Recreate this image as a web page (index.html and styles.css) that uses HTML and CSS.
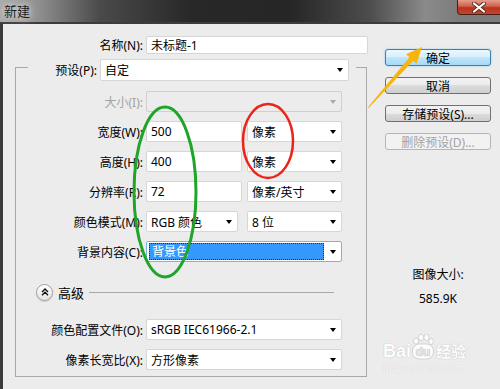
FILE: index.html
```html
<!DOCTYPE html>
<html lang="zh-CN">
<head>
    <meta charset="UTF-8">
    <title>新建</title>
    <link rel="stylesheet" href="styles.css">
</head>
<body>

<div class="window">
    <!-- Title bar -->
    <div class="titlebar">
        <span class="title">新建</span>
        <span class="close">
            <svg width="16" height="11" viewBox="0 0 16 11">
                <path d="M3 1.5 L13 9.5 M13 1.5 L3 9.5" stroke="#5a2a22" stroke-width="4" stroke-linecap="round"/>
                <path d="M3 1.5 L13 9.5 M13 1.5 L3 9.5" stroke="#fff" stroke-width="2.2" stroke-linecap="round"/>
            </svg>
        </span>
    </div>

    <div class="body">
        <!-- Left: form -->
        <div class="form">
            <div class="row name-row">
                <label class="lbl">名称(N):</label>
                <div class="field name-field">未标题-1</div>
            </div>

            <div class="group">
                <div class="legend">
                    <label class="lbl legend-lbl">预设(P):</label>
                    <div class="field select preset">自定<i class="arrow"></i></div>
                </div>

                <div class="row size-row">
                    <label class="lbl g-lbl disabled-text">大小(I):</label>
                    <div class="field select disabled full"><i class="arrow grey"></i></div>
                </div>

                <div class="row">
                    <label class="lbl g-lbl">宽度(W):</label>
                    <div class="field num">500</div>
                    <div class="field select unit">像素<i class="arrow"></i></div>
                </div>

                <div class="row">
                    <label class="lbl g-lbl">高度(H):</label>
                    <div class="field num">400</div>
                    <div class="field select unit">像素<i class="arrow"></i></div>
                </div>

                <div class="row">
                    <label class="lbl g-lbl">分辨率(R):</label>
                    <div class="field num">72</div>
                    <div class="field select unit">像素/英寸<i class="arrow"></i></div>
                </div>

                <div class="row">
                    <label class="lbl g-lbl">颜色模式(M):</label>
                    <div class="field select mode">RGB 颜色<i class="arrow"></i></div>
                    <div class="field select bits">8 位<i class="arrow"></i></div>
                </div>

                <div class="row">
                    <label class="lbl g-lbl">背景内容(C):</label>
                    <div class="field select full focused">
                        <span class="highlight">背景色</span><i class="arrow"></i>
                    </div>
                </div>

                <div class="advanced">
                    <span class="toggle">
                        <svg width="8" height="8" viewBox="0 0 8 8">
                            <path d="M1 4 L4 1 L7 4 M1 7.2 L4 4.2 L7 7.2" fill="none" stroke="#111" stroke-width="1.4"/>
                        </svg>
                    </span>
                    <span class="adv-text">高级</span>
                    <span class="adv-line"></span>
                </div>

                <div class="row profile-row">
                    <label class="lbl g-lbl">颜色配置文件(O):</label>
                    <div class="field select full">sRGB IEC61966-2.1<i class="arrow"></i></div>
                </div>

                <div class="row">
                    <label class="lbl g-lbl">像素长宽比(X):</label>
                    <div class="field select full">方形像素<i class="arrow"></i></div>
                </div>
            </div>
        </div>

        <!-- Right: buttons -->
        <div class="side">
            <div class="btn primary">确定</div>
            <div class="btn">取消</div>
            <div class="btn">存储预设(S)...</div>
            <div class="btn disabled">删除预设(D)...</div>
            <div class="info-label">图像大小:</div>
            <div class="info-value">585.9K</div>
        </div>
    </div>

    <!-- hand-drawn annotations on top of the screenshot -->
    <svg class="marks" width="500" height="389" viewBox="0 0 500 389">
        <ellipse cx="165" cy="192" rx="31" ry="85" fill="none" stroke="#1fa52a" stroke-width="3"/>
        <ellipse cx="268" cy="141" rx="25" ry="37" fill="none" stroke="#ea2418" stroke-width="2.5"/>
        <polygon points="367.6,107.7 409.4,57.3 406,54.3 422,47 416.6,63.7 413.2,60.7 368.4,108.3" fill="#f7b50c"/>
    </svg>

    <!-- watermark -->
    <div class="watermark">
        <div class="wm-logo">
            <span class="wm-bai">Bai</span>
            <svg class="wm-paw" width="24" height="26" viewBox="0 0 24 26">
                <ellipse cx="5" cy="7" rx="2.6" ry="3.2" fill="#fff" stroke="#cfcfcf"/>
                <ellipse cx="10" cy="3.5" rx="2.6" ry="3.2" fill="#fff" stroke="#cfcfcf"/>
                <ellipse cx="15.5" cy="3.5" rx="2.6" ry="3.2" fill="#fff" stroke="#cfcfcf"/>
                <ellipse cx="20" cy="7.5" rx="2.4" ry="3" fill="#fff" stroke="#cfcfcf"/>
                <rect x="1.5" y="10" width="21" height="15" rx="7" fill="#fff" stroke="#cfcfcf"/>
                <text x="12" y="22" text-anchor="middle" font-family="Liberation Sans, sans-serif" font-size="12" font-weight="bold" fill="#e4e4e4">du</text>
            </svg>
            <span class="wm-jy">经验</span>
        </div>
        <div class="wm-url">jingyan.baidu.com</div>
    </div>
</div>

</body>
</html>
```

FILE: styles.css
```css
* {
    box-sizing: border-box;
}

body {
    margin: 0;
    font-family: "Noto Sans", "Noto Sans CJK SC", sans-serif;
    font-size: 12px;
    color: #000;
}

.window {
    width: 500px;
    height: 389px;
    background-color: #ececec;
    position: relative;
    overflow: hidden;
    display: flex;
    flex-direction: column;
}

/* title bar */
.titlebar {
    height: 24px;
    flex: none;
    display: flex;
    justify-content: space-between;
    align-items: flex-start;
    background: linear-gradient(to right, #aaaaaa 0, #8e8e8e 40px, #4a4a4a 100px, #282828 190px, #262626 290px, #4d4d4d 370px, #8a8a8a 425px, #7c7c7c 460px);
    border-bottom: 2px solid #3c3c3c;
}

.title {
    font-family: "Noto Sans CJK SC", sans-serif;
    font-size: 13px;
    line-height: 21px;
    padding-left: 4px;
    color: #1a1a1a;
    text-shadow: 0 0 6px #ddd, 0 0 10px #ddd;
}

.close {
    width: 43px;
    height: 15px;
    border: 1px solid #4b1d16;
    border-top: none;
    border-right: none;
    border-radius: 0 0 0 4px;
    background: linear-gradient(#e49e8f, #d0604a 45%, #b9341f 55%, #c8432c);
    display: flex;
    align-items: center;
    justify-content: center;
}

/* dialog body */
.body {
    flex: 1;
    display: flex;
    border-left: 3px solid #3a3a3a;
    padding-top: 12px;
}

.form {
    width: 365px;
    flex: none;
}

.row {
    display: flex;
    align-items: center;
    height: 21px;
    margin-top: 9px;
}

.lbl {
    flex: none;
    width: 143px;
    padding-right: 3px;
    text-align: right;
    font-family: "Noto Sans", "Noto Sans CJK SC", sans-serif;
    white-space: nowrap;
}

.name-row {
    height: 18px;
    margin-top: 0;
}

.name-field {
    width: 222px;
}

.field {
    height: 100%;
    background-color: #fff;
    border: 1px solid #d6d6d6;
    border-radius: 2px;
    padding-left: 4px;
    display: flex;
    align-items: center;
    white-space: nowrap;
}

.select {
    padding-right: 5px;
}

.arrow {
    margin-left: auto;
    width: 0;
    height: 0;
    border-style: solid;
    border-width: 4px 3.5px 0;
    border-color: #000 transparent transparent;
}

.arrow.grey {
    border-top-color: #a8a8a8;
}

/* group box */
.group {
    margin: 13px 0 0 12px;
    width: 352px;
    height: 310px;
    border: 1px solid #a9a9a9;
    display: flex;
    flex-direction: column;
}

.legend {
    margin: -9px 0 0 12px;
    width: 328px;
    height: 22px;
    flex: none;
    display: flex;
    align-items: center;
    background-color: #ececec;
}

.legend-lbl {
    width: 72px;
}

.preset {
    width: 249px;
}

.g-lbl {
    width: 130px;
}

.size-row {
    margin-top: 10px;
}

.disabled-text {
    color: #a2a2a2;
}

.select.disabled {
    background-color: #ececec;
    border-color: #cfcfcf;
}

.full {
    width: 196px;
}

.num {
    width: 96px;
}

.unit,
.bits {
    width: 95px;
    margin-left: 5px;
}

.mode {
    width: 92px;
}

.bits {
    margin-left: 9px;
}

.focused {
    border-color: #7fb2e3;
    padding-left: 2px;
}

.highlight {
    width: 175px;
    height: 17px;
    background-color: #3399ff;
    color: #fff;
    outline: 1px dotted #3a2a10;
    outline-offset: -1px;
    padding-left: 3px;
    line-height: 17px;
}

/* advanced */
.advanced {
    margin-top: 21px;
    height: 18px;
    display: flex;
    align-items: center;
}

.toggle {
    margin-left: 20px;
    width: 17px;
    height: 17px;
    border: 1px solid #a0a0a0;
    border-radius: 50%;
    background: linear-gradient(#ffffff, #e2e2e2);
    box-shadow: 0 1px 1px rgba(0, 0, 0, 0.15);
    display: flex;
    align-items: center;
    justify-content: center;
}

.adv-text {
    margin-left: 5px;
    font-size: 13px;
}

.adv-line {
    flex: 1;
    height: 1px;
    background-color: #a9a9a9;
    margin: 0 32px 0 5px;
}

.profile-row {
    margin-top: 18px;
}

/* right column */
.side {
    margin-left: 17px;
    padding-top: 13px;
    width: 106px;
    display: flex;
    flex-direction: column;
}

.btn {
    height: 17px;
    margin-bottom: 11px;
    border: 1px solid #707070;
    border-radius: 3px;
    background: linear-gradient(#f3f3f3 0, #ebebeb 50%, #dcdcdc 50%, #cfcfcf 100%);
    display: flex;
    align-items: center;
    justify-content: center;
    white-space: nowrap;
}

.btn.primary {
    border-color: #3c7fb1;
    background: linear-gradient(#eaf6fd 0, #d9f0fc 50%, #bee6fd 50%, #a7d9f5 100%);
    box-shadow: 0 0 2px #7fc4ee;
}

.btn.disabled {
    border-color: #b3b6b8;
    background: #f2f2f2;
    color: #a3a3a3;
}

.info-label {
    margin-top: 106px;
    text-align: center;
    line-height: 16px;
}

.info-value {
    margin-top: 8px;
    text-align: center;
    line-height: 16px;
}

/* overlays */
.marks {
    position: absolute;
    left: 0;
    top: 0;
    pointer-events: none;
}

.watermark {
    position: absolute;
    left: 383px;
    top: 334px;
    opacity: 0.9;
}

.wm-logo {
    display: flex;
    align-items: flex-end;
    color: #fff;
    font-weight: bold;
    text-shadow: 0 0 1px #bdbdbd, 0 0 1px #bdbdbd;
}

.wm-bai {
    font-family: "Liberation Sans", sans-serif;
    font-size: 18px;
    line-height: 20px;
}

.wm-paw {
    margin-bottom: 1px;
}

.wm-jy {
    font-family: "Noto Sans CJK SC", sans-serif;
    font-size: 15px;
    line-height: 20px;
    margin-left: 1px;
}

.wm-url {
    font-family: "Liberation Serif", serif;
    font-size: 10px;
    color: #fff;
    text-shadow: 0 0 1px #b8b8b8;
    margin-top: 1px;
    letter-spacing: 0.3px;
}
```
